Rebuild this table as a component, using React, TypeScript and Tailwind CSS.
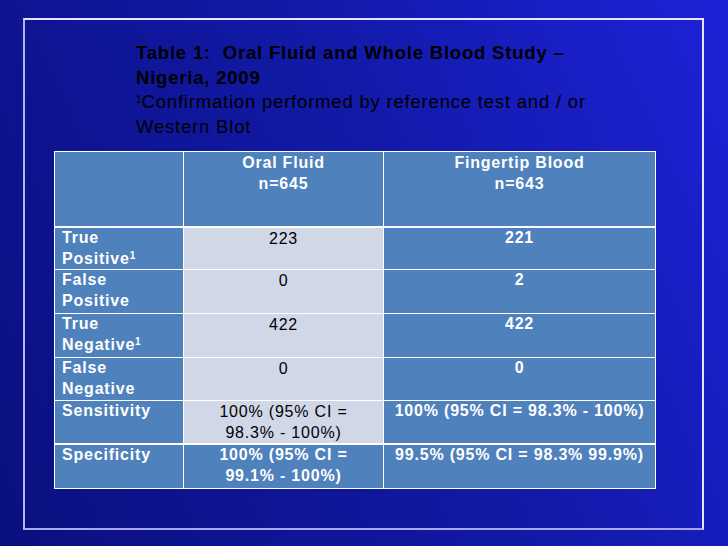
import React from 'react';

/**
 * Slide: oral fluid vs fingertip blood results table
 */
const rows = [
  { label: ['True', 'Positive'], sup: true, oral: ['223'], finger: '221' },
  { label: ['False', 'Positive'], sup: false, oral: ['0'], finger: '2' },
  { label: ['True', 'Negative'], sup: true, oral: ['422'], finger: '422' },
  { label: ['False', 'Negative'], sup: false, oral: ['0'], finger: '0' },
  {
    label: ['Sensitivity'],
    sup: false,
    oral: ['100% (95% CI =', '98.3% - 100%)'],
    finger: '100% (95% CI = 98.3% - 100%)',
  },
];

const cell = 'text-[16px] leading-[20.5px] tracking-[0.8px]';

const App = () => {
  return (
    <div
      className="w-[728px] h-[546px] pt-[18px] pl-[23px] bg-[linear-gradient(65deg,#0a0f7e_0%,#1219a6_55%,#1d22d8_100%)]"
      style={{ fontFamily: '"Liberation Sans", Arial, sans-serif' }}
    >
      <div className="w-[681px] h-[512px] border-2 border-t-[#e4e4ff] border-r-[#e4e4ff] border-b-[#a8a8f0] border-l-[#b4b4f4]">
        {/* Title block */}
        <div className="pt-[21px] pl-[111px] text-[18.5px] leading-[24.5px] tracking-[0.8px] text-black">
          <p className="font-bold">
            Table 1:&nbsp; Oral Fluid and Whole Blood Study –
            <br />
            Nigeria, 2009
          </p>
          <p>
            <sup className="text-[10px] tracking-normal">1</sup>Confirmation performed by reference test and / or
            <br />
            Western Blot
          </p>
        </div>

        {/* Table */}
        <div className="mt-[12px] ml-[29px] w-[602px] bg-white p-px flex flex-col">
          <div className="grid grid-cols-[128px_199px_271px] gap-px h-[74px]">
            <div className="bg-[#4f81bd]" />
            <div className={`bg-[#4f81bd] text-white font-bold text-center pt-px ${cell}`}>
              Oral Fluid
              <br />
              n=645
            </div>
            <div className={`bg-[#4f81bd] text-white font-bold text-center pt-px ${cell}`}>
              Fingertip Blood
              <br />
              n=643
            </div>
          </div>

          {rows.map((r, i) => (
            <div
              key={i}
              className={`grid grid-cols-[128px_199px_271px] gap-px ${i === 0 ? 'mt-[2px] h-[41px]' : 'mt-px'} ${
                i === 1 || i === 2 ? 'h-[43px]' : ''
              } ${i === 3 || i === 4 ? 'h-[42px]' : ''}`}
            >
              <div className={`bg-[#4f81bd] text-white font-bold pl-[7px] ${cell}`}>
                {r.label[0]}
                {r.label[1] && (
                  <>
                    <br />
                    {r.label[1]}
                    {r.sup && <sup className="text-[10px] tracking-normal">1</sup>}
                  </>
                )}
              </div>
              <div className={`bg-[#d0d8e8] text-black text-center pt-px ${cell}`}>
                {r.oral[0]}
                {r.oral[1] && (
                  <>
                    <br />
                    {r.oral[1]}
                  </>
                )}
              </div>
              <div className={`bg-[#4f81bd] text-white font-bold text-center whitespace-nowrap ${cell}`}>
                {r.finger}
              </div>
            </div>
          ))}

          <div className="grid grid-cols-[128px_199px_271px] gap-px h-[43px] mt-[2px]">
            <div className={`bg-[#4f81bd] text-white font-bold pl-[7px] ${cell}`}>Specificity</div>
            <div className={`bg-[#4f81bd] text-white font-bold text-center ${cell}`}>
              100% (95% CI =
              <br />
              99.1% - 100%)
            </div>
            <div className={`bg-[#4f81bd] text-white font-bold text-center whitespace-nowrap ${cell}`}>
              99.5% (95% CI = 98.3% 99.9%)
            </div>
          </div>
        </div>
      </div>
    </div>
  );
};

export default App;
